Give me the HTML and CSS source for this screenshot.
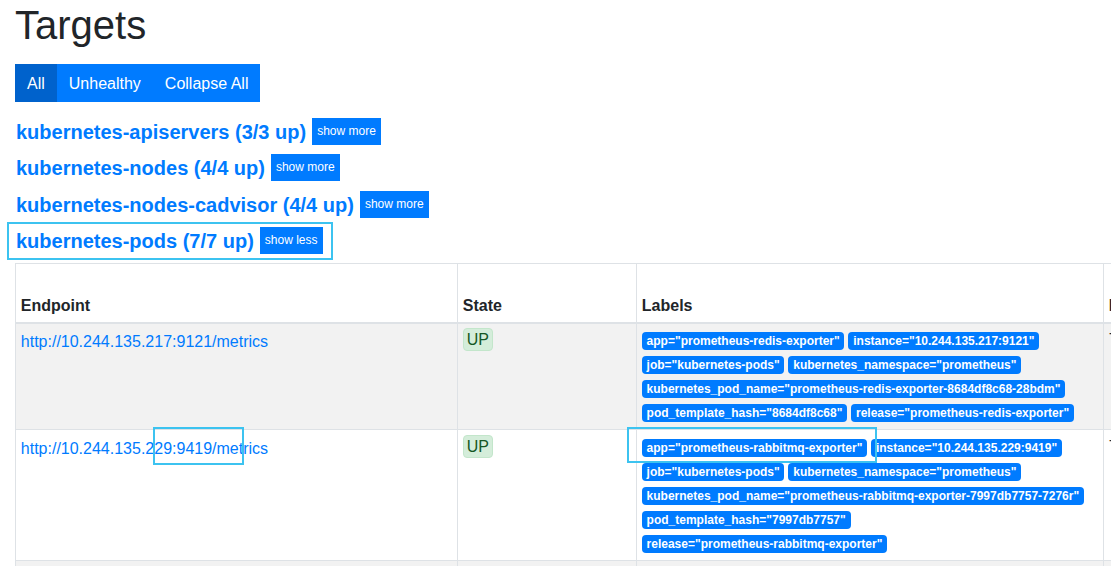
FILE: index.html
```html
<!DOCTYPE html>
<html lang="en">
<head>
<meta charset="utf-8">
<title>Targets</title>
<link rel="stylesheet" href="styles.css">
</head>
<body>
<div class="page">
  <h1 class="title">Targets</h1>
  <div class="btn-group">
    <button class="btn btn-active">All</button><button class="btn">Unhealthy</button><button class="btn">Collapse All</button>
  </div>

  <div class="job"><a class="job-link" href="#job-kubernetes-apiservers">kubernetes-apiservers (3/3 up)</a><button class="toggle">show more</button></div>
  <div class="job"><a class="job-link" href="#job-kubernetes-nodes">kubernetes-nodes (4/4 up)</a><button class="toggle">show more</button></div>
  <div class="job"><a class="job-link" href="#job-kubernetes-nodes-cadvisor">kubernetes-nodes-cadvisor (4/4 up)</a><button class="toggle">show more</button></div>
  <div class="job"><a class="job-link" href="#job-kubernetes-pods">kubernetes-pods (7/7 up)</a><button class="toggle">show less</button></div>

  <table class="targets">
    <colgroup>
      <col class="c-endpoint"><col class="c-state"><col class="c-labels"><col class="c-scrape"><col class="c-duration"><col class="c-error">
    </colgroup>
    <thead>
      <tr><th>Endpoint</th><th>State</th><th>Labels</th><th>Last Scrape</th><th>Scrape Duration</th><th>Error</th></tr>
    </thead>
    <tbody>
      <tr class="striped">
        <td><a class="endpoint" href="#">http://10.244.135.217:9121/metrics</a></td>
        <td><span class="state">UP</span></td>
        <td>
          <div class="label-line"><span class="label">app="prometheus-redis-exporter"</span><span class="label">instance="10.244.135.217:9121"</span></div>
          <div class="label-line"><span class="label">job="kubernetes-pods"</span><span class="label">kubernetes_namespace="prometheus"</span></div>
          <div class="label-line"><span class="label">kubernetes_pod_name="prometheus-redis-exporter-8684df8c68-28bdm"</span></div>
          <div class="label-line"><span class="label">pod_template_hash="8684df8c68"</span><span class="label">release="prometheus-redis-exporter"</span></div>
        </td>
        <td class="scrape">7.412s ago</td>
        <td>12.31ms</td>
        <td></td>
      </tr>
      <tr>
        <td><a class="endpoint" href="#">http://10.244.135.229:9419/metrics</a></td>
        <td><span class="state">UP</span></td>
        <td>
          <div class="label-line"><span class="label">app="prometheus-rabbitmq-exporter"</span><span class="label">instance="10.244.135.229:9419"</span></div>
          <div class="label-line"><span class="label">job="kubernetes-pods"</span><span class="label">kubernetes_namespace="prometheus"</span></div>
          <div class="label-line"><span class="label">kubernetes_pod_name="prometheus-rabbitmq-exporter-7997db7757-7276r"</span></div>
          <div class="label-line"><span class="label">pod_template_hash="7997db7757"</span></div>
          <div class="label-line"><span class="label">release="prometheus-rabbitmq-exporter"</span></div>
        </td>
        <td class="scrape">7.905s ago</td>
        <td>41.82ms</td>
        <td></td>
      </tr>
      <tr class="striped">
        <td><a class="endpoint" href="#">http://10.244.135.230:9100/metrics</a></td>
        <td><span class="state">UP</span></td>
        <td>
          <div class="label-line"><span class="label">job="kubernetes-pods"</span></div>
        </td>
        <td class="scrape">3.118s ago</td>
        <td>9.04ms</td>
        <td></td>
      </tr>
    </tbody>
  </table>

  <div class="mark mark-job"></div>
  <div class="mark mark-endpoint"></div>
  <div class="mark mark-label"></div>
</div>
</body>
</html>
```

FILE: styles.css
```css
html, body {
  margin: 0;
  padding: 0;
  overflow: hidden;
  background: #fff;
}

body {
  font-family: "Liberation Sans", Arial, sans-serif;
  font-size: 16px;
  line-height: 1.5;
  color: #212529;
}

.page {
  position: relative;
  padding: 0 15px;
}

.title {
  margin: 0 0 15px;
  padding-top: 1px;
  font-size: 40px;
  font-weight: 400;
  line-height: 48px;
  color: #212529;
}

.btn-group {
  display: flex;
  margin-bottom: 15px;
}

.btn {
  font: inherit;
  color: #fff;
  background: #007bff;
  border: 0;
  border-radius: 0;
  padding: 7px 12px 6px;
  line-height: 25px;
  cursor: pointer;
}

.btn-active {
  background: #0062cc;
}

.job {
  display: flex;
  align-items: center;
  gap: 6px;
  height: 28px;
  margin-bottom: 8.5px;
}

.job-link {
  font-size: 20px;
  font-weight: 700;
  line-height: 24px;
  color: #007bff;
  text-decoration: none;
  padding: 1px 0 0 1px;
}

.toggle {
  font-family: inherit;
  font-size: 12px;
  line-height: 19px;
  color: #fff;
  background: #007bff;
  border: 0;
  border-radius: 0;
  padding: 4px 5px;
  cursor: pointer;
}

.targets {
  border-collapse: collapse;
  table-layout: fixed;
  width: 1500px;
}

.c-endpoint { width: 442px; }
.c-state { width: 179px; }
.c-labels { width: 467px; }
.c-scrape { width: 130px; }
.c-duration { width: 90px; }
.c-error { width: 192px; }

.targets th,
.targets td {
  border: 1px solid #dee2e6;
  padding: 4.8px;
  text-align: left;
}

.targets th {
  vertical-align: bottom;
  border-bottom-width: 2px;
  font-weight: 700;
  padding-top: 5.8px;
  padding-bottom: 3.8px;
}

.targets td {
  vertical-align: top;
}

.striped td {
  background: #f2f2f2;
}

.endpoint {
  display: inline-block;
  padding-top: 2px;
  color: #007bff;
  text-decoration: none;
}

.state {
  display: inline-block;
  vertical-align: top;
  padding: 1px 3px 0;
  line-height: 20px;
  color: #155724;
  background: #d4edda;
  border: 1px solid #c3e6cb;
  border-radius: 4px;
}

.label-line {
  box-sizing: border-box;
  display: flex;
  align-items: flex-start;
  gap: 4px;
  height: 24px;
  padding-top: 4px;
}

.label {
  display: inline-block;
  font-size: 12px;
  font-weight: 700;
  line-height: 12px;
  padding: 3px 4.8px;
  color: #fff;
  background: #007bff;
  border-radius: 4px;
  white-space: nowrap;
}

.scrape {
  color: #212529;
}

.mark {
  position: absolute;
  border: 2px solid #3cc3f0;
  pointer-events: none;
}

.mark-job {
  left: 7px;
  top: 222px;
  width: 322px;
  height: 34px;
}

.mark-endpoint {
  left: 153px;
  top: 427px;
  width: 87px;
  height: 34px;
}

.mark-label {
  left: 627px;
  top: 427px;
  width: 246px;
  height: 32px;
}
```
